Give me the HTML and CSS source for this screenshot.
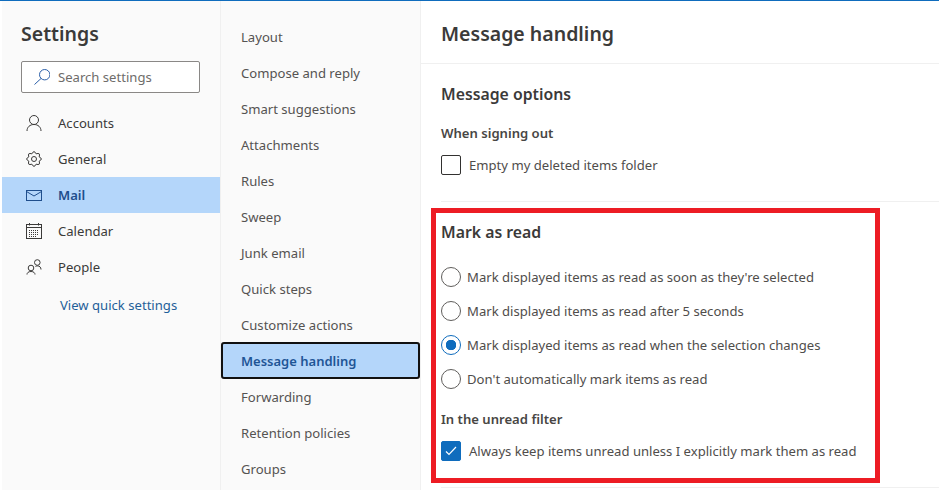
FILE: index.html
```html
<!DOCTYPE html>
<html lang="en">
<head>
<meta charset="utf-8">
<title>Settings</title>
<link rel="stylesheet" href="styles.css">
</head>
<body>
<div class="app">
  <nav class="nav">
    <h1 class="title">Settings</h1>
    <div class="search">
      <svg class="search-icon" width="16" height="16" viewBox="0 0 16 16" fill="none" stroke="#2b5fa8" stroke-width="1"><circle cx="10.700" cy="5.700" r="5.200"/><path d="M7 9.500 .5 15.500"/></svg>
      <span>Search settings</span>
    </div>
    <ul class="nav-list">
      <li class="nav-item">
        <svg class="nav-icon" width="16" height="18" viewBox="0 0 16 18" fill="none" stroke="#3b3a39"><circle cx="8" cy="6" r="4.500"/><path d="M1 17c0-4 3-6.500 7-6.500s7 2.500 7 6.500"/></svg>
        <span>Accounts</span>
      </li>
      <li class="nav-item">
        <svg class="nav-icon" width="16" height="16" viewBox="0 0 16 16" fill="none" stroke="#3b3a39"><circle cx="8" cy="8" r="2.500"/><path d="M5.860 2.830Q8-1.500 10.140 2.830 14.720 1.280 13.170 5.860 17.500 8 13.170 10.140 14.720 14.720 10.140 13.170 8 17.500 5.860 13.170 1.280 14.720 2.830 10.140-1.500 8 2.830 5.860 1.280 1.280 5.860 2.830z"/></svg>
        <span>General</span>
      </li>
      <li class="nav-item is-active">
        <svg class="nav-icon" width="16" height="12" viewBox="0 0 16 12" fill="none" stroke="#1f4e8c"><rect x=".5" y="1.500" width="15" height="10"/><path d="M.5 2.500 8 7l7.500-4.500"/></svg>
        <span>Mail</span>
      </li>
      <li class="nav-item">
        <svg class="nav-icon" width="16" height="16" viewBox="0 0 16 16" fill="none" stroke="#3b3a39"><rect x=".5" y="1.500" width="15" height="14"/><path d="M.5 4.500h15M3.500 0v2.500M12.500 0v2.500"/><path d="M3 7.500h10M3 9.500h10M3 11.500h10M3 13.500h7" stroke-dasharray="1 1"/></svg>
        <span>Calendar</span>
      </li>
      <li class="nav-item">
        <svg class="nav-icon" width="16" height="16" viewBox="0 0 16 16" fill="none" stroke="#3b3a39"><circle cx="11.300" cy="3.500" r="2.800"/><circle cx="5" cy="9" r="2.800"/><path d="M1 15.500c0-1.500 1.200-3 4-3s4 1.500 4 3M9.500 7.500c.5-.4 1-.6 1.800-.6 2.300 0 3.700 1.300 3.700 3.600"/></svg>
        <span>People</span>
      </li>
    </ul>
    <div class="quick-link">View quick settings</div>
  </nav>

  <aside class="subnav">
    <ul class="subnav-list">
      <li class="subnav-item">Layout</li>
      <li class="subnav-item">Compose and reply</li>
      <li class="subnav-item">Smart suggestions</li>
      <li class="subnav-item">Attachments</li>
      <li class="subnav-item">Rules</li>
      <li class="subnav-item">Sweep</li>
      <li class="subnav-item">Junk email</li>
      <li class="subnav-item">Quick steps</li>
      <li class="subnav-item">Customize actions</li>
      <li class="subnav-item is-selected">Message handling</li>
      <li class="subnav-item">Forwarding</li>
      <li class="subnav-item">Retention policies</li>
      <li class="subnav-item">Groups</li>
    </ul>
  </aside>

  <main class="content">
    <header class="content-head"><h2 class="content-title">Message handling</h2></header>
    <div class="body">
      <section class="section first">
        <h3 class="section-title">Message options</h3>
        <h4 class="label">When signing out</h4>
        <div class="check-row">
          <span class="checkbox"></span>
          <span>Empty my deleted items folder</span>
        </div>
      </section>
      <section class="section second">
        <h3 class="section-title">Mark as read</h3>
        <div class="radios">
          <div class="radio-row"><span class="radio"></span><span>Mark displayed items as read as soon as they're selected</span></div>
          <div class="radio-row"><span class="radio"></span><span>Mark displayed items as read after 5 seconds</span></div>
          <div class="radio-row"><span class="radio is-on"></span><span>Mark displayed items as read when the selection changes</span></div>
          <div class="radio-row"><span class="radio"></span><span>Don't automatically mark items as read</span></div>
        </div>
        <h4 class="label unread-label">In the unread filter</h4>
        <div class="check-row">
          <span class="checkbox is-on"><svg width="12" height="10" viewBox="0 0 12 10" fill="none" stroke="#fff" stroke-width="1.200"><path d="M1 5.500 4 8.500 11 1"/></svg></span>
          <span>Always keep items unread unless I explicitly mark them as read</span>
        </div>
      </section>
      <div class="highlight"></div>
    </div>
  </main>
</div>
</body>
</html>
```
FILE: styles.css
```css
* { box-sizing: border-box; }
html, body { margin: 0; height: 100%; }
body {
  font-family: "Noto Sans", "Open Sans", sans-serif;
  font-size: 13.1px;
  color: #3b3a39;
  background: #fff;
  overflow: hidden;
}
ul { list-style: none; margin: 0; padding: 0; }
h1, h2, h3, h4 { margin: 0; font-weight: 600; }

.app {
  display: grid;
  grid-template-columns: 219px 200px 1fr;
  height: 490px;
  border-top: 1px solid #0f6cbd;
  padding-left: 2px;
}

.nav { background: #fafafa; border-right: 1px solid #f0f0f0; }
.title { font-size: 19.500px; line-height: 28px; padding: 19px 0 0 19px; color: #3b3a39; }
.search {
  display: flex;
  align-items: center;
  gap: 8px;
  width: 179px;
  height: 32px;
  margin: 13px 0 0 19px;
  padding-left: 12px;
  border: 1px solid #8a8886;
  border-radius: 2px;
  background: #fff;
  color: #6e6c6a;
}
.nav-list { margin-top: 12px; }
.nav-item {
  position: relative;
  display: flex;
  align-items: center;
  height: 36px;
  padding-left: 56px;
}
.nav-icon { position: absolute; left: 24px; top: 50%; transform: translateY(-50%); }
.nav-item.is-active { background: #b4d6fa; color: #1f4e8c; font-weight: 600; }
.quick-link { padding: 11px 0 0 58px; line-height: 18px; color: #1f5f99; }

.subnav { background: #fafafa; border-right: 1px solid #f0f0f0; }
.subnav-list { padding-top: 18px; }
.subnav-item {
  display: flex;
  align-items: center;
  height: 36px;
  padding-left: 20px;
  color: #555352;
}
.subnav-item.is-selected {
  height: 37px;
  margin-top: -1px;
  background: #b4d6fa;
  color: #1f5596;
  font-size: 13px;
  font-weight: 600;
  border: 2px solid #111;
  border-radius: 3px;
  padding-left: 18px;
}

.content { background: #fff; min-width: 0; }
.content-head { height: 63px; padding: 19px 0 0 20px; border-bottom: 1px solid #f0f0f0; }
.content-title { font-size: 19.500px; line-height: 28px; color: #3b3a39; }
.body { position: relative; height: 426px; }
.section { margin: 0 0 0 20px; border-bottom: 1px solid #f0f0f0; }
.first { height: 138px; padding-top: 18px; }
.section-title { font-size: 15.800px; line-height: 24px; color: #3b3a39; }
.label { font-size: 13.100px; line-height: 18px; color: #484644; }
.first .label { margin-top: 18px; }
.check-row { display: flex; align-items: center; gap: 8px; margin-top: 13px; line-height: 20px; color: #4f4d4b; }
.checkbox {
  display: flex;
  align-items: center;
  justify-content: center;
  width: 20px;
  height: 20px;
  border: 1px solid #323130;
  border-radius: 2px;
  background: #fff;
  flex: none;
}
.checkbox.is-on { background: #0f6cbd; border-color: #0f6cbd; }
.second { height: 286px; padding-top: 18px; }
.radios { margin-top: 16px; }
.radio-row { display: flex; align-items: center; gap: 6px; height: 34px; color: #4f4d4b; }
.radio {
  width: 20px;
  height: 20px;
  border: 1px solid #605e5c;
  border-radius: 50%;
  background: #fff;
  flex: none;
}
.radio.is-on {
  border-color: #0f6cbd;
  background: radial-gradient(circle, #0f6cbd 0 5px, #fff 5.500px);
}
.unread-label { margin-top: 14px; }

.highlight {
  position: absolute;
  left: 10px;
  top: 144px;
  width: 449px;
  height: 275px;
  border: 5px solid #ed1c24;
  pointer-events: none;
}
```
